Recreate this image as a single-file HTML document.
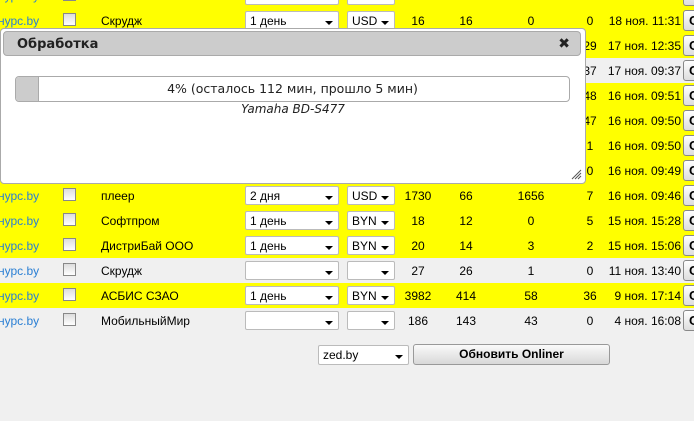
<!DOCTYPE html><html><head><meta charset="utf-8"><style>
*{margin:0;padding:0;box-sizing:border-box}
body{width:694px;height:421px;overflow:hidden;background:#f0f0f0;font-family:"Liberation Sans",sans-serif;font-size:12px;color:#000;position:relative}
.r{position:absolute;left:0;width:694px;height:25px}
.y{background:#ffff00}.g{background:#f0f0f0}
.r span{position:absolute;top:6px;white-space:nowrap}
.l{left:-2px;color:#2a7fd4}
.cb{position:absolute;left:63px;top:5px;width:13px;height:13px;border:1px solid #888;background:linear-gradient(#ddd,#fff)}
.n{left:101px}
.s{position:absolute;top:3px;height:19px;background:#fff;border:1px solid #bbb;border-radius:2px;font-size:12px;padding:2px 4px}
.s:after{content:"";position:absolute;right:5px;top:9px;border-left:4px solid transparent;border-right:4px solid transparent;border-top:4px solid #000}
.s1{left:245px;width:94px}.s2{left:347px;width:48px}
.c{width:40px;text-align:center}
.a{left:398px}.b{left:446px}.d{left:511px}.e{left:570px}
.t{right:13px}
.bt{position:absolute;left:683px;top:2px;width:20px;height:21px;border:1px solid #888;border-radius:3px;background:linear-gradient(#fff,#ddd);font-weight:bold;font-size:13px;line-height:19px;padding-left:5px}
.bt:before{content:"О"}
</style></head><body>
<div class="r y" style="top:-17px"><span class="l">нурс.by</span><div class="cb"></div><div class="s s1"></div><div class="s s2"></div><div class="bt"></div></div>
<div class="r y" style="top:8px"><span class="l">нурс.by</span><div class="cb"></div><span class="n">Скрудж</span><div class="s s1">1 день</div><div class="s s2">USD</div><span class="c a">16</span><span class="c b">16</span><span class="c d">0</span><span class="c e">0</span><span class="t">18 ноя. 11:31</span><div class="bt"></div></div>
<div class="r y" style="top:33px"><span class="c e">29</span><span class="t">17 ноя. 12:35</span><div class="bt"></div></div>
<div class="r g" style="top:58px"><span class="c e">37</span><span class="t">17 ноя. 09:37</span><div class="bt"></div></div>
<div class="r y" style="top:83px"><span class="c e">48</span><span class="t">16 ноя. 09:51</span><div class="bt"></div></div>
<div class="r y" style="top:108px"><span class="c e">47</span><span class="t">16 ноя. 09:50</span><div class="bt"></div></div>
<div class="r y" style="top:133px"><span class="c e">1</span><span class="t">16 ноя. 09:50</span><div class="bt"></div></div>
<div class="r y" style="top:158px"><span class="c e">0</span><span class="t">16 ноя. 09:49</span><div class="bt"></div></div>
<div class="r y" style="top:183px"><span class="l">нурс.by</span><div class="cb"></div><span class="n">плеер</span><div class="s s1">2 дня</div><div class="s s2">USD</div><span class="c a">1730</span><span class="c b">66</span><span class="c d">1656</span><span class="c e">7</span><span class="t">16 ноя. 09:46</span><div class="bt"></div></div>
<div class="r y" style="top:208px"><span class="l">нурс.by</span><div class="cb"></div><span class="n">Софтпром</span><div class="s s1">1 день</div><div class="s s2">BYN</div><span class="c a">18</span><span class="c b">12</span><span class="c d">0</span><span class="c e">5</span><span class="t">15 ноя. 15:28</span><div class="bt"></div></div>
<div class="r y" style="top:233px"><span class="l">нурс.by</span><div class="cb"></div><span class="n">ДистриБай ООО</span><div class="s s1">1 день</div><div class="s s2">BYN</div><span class="c a">20</span><span class="c b">14</span><span class="c d">3</span><span class="c e">2</span><span class="t">15 ноя. 15:06</span><div class="bt"></div></div>
<div class="r g" style="top:258px"><span class="l">нурс.by</span><div class="cb"></div><span class="n">Скрудж</span><div class="s s1"></div><div class="s s2"></div><span class="c a">27</span><span class="c b">26</span><span class="c d">1</span><span class="c e">0</span><span class="t">11 ноя. 13:40</span><div class="bt"></div></div>
<div class="r y" style="top:283px"><span class="l">нурс.by</span><div class="cb"></div><span class="n">АСБИС СЗАО</span><div class="s s1">1 день</div><div class="s s2">BYN</div><span class="c a">3982</span><span class="c b">414</span><span class="c d">58</span><span class="c e">36</span><span class="t">9 ноя. 17:14</span><div class="bt"></div></div>
<div class="r g" style="top:308px"><span class="l">нурс.by</span><div class="cb"></div><span class="n">МобильныйМир</span><div class="s s1"></div><div class="s s2"></div><span class="c a">186</span><span class="c b">143</span><span class="c d">43</span><span class="c e">0</span><span class="t">4 ноя. 16:08</span><div class="bt"></div></div>
<div class="s" style="left:318px;top:345px;width:91px;height:20px;position:absolute">zed.by</div>
<div style="position:absolute;left:413px;top:344px;width:197px;height:21px;border:1px solid #999;border-radius:3px;background:linear-gradient(#fafafa,#d8d8d8);font-weight:bold;text-align:center;line-height:19px">Обновить Onliner</div>
<div style="position:absolute;left:0;top:28px;width:586px;height:156px;background:#fff;border:1px solid #aaa;border-radius:4px">
<div style="position:absolute;left:2px;top:2px;width:calc(100% - 6px);height:25px;background:#cccccc;border:1px solid #aaa;border-radius:4px;font-family:'DejaVu Sans',sans-serif;font-weight:bold;font-size:13px;line-height:25px;padding-left:13px;color:#222">Обработка<span style="position:absolute;right:10px;top:0;font-size:14px">✖</span></div>
<div style="position:absolute;left:14px;top:47px;width:555px;height:26px;border:1px solid #aaa;border-radius:4px;overflow:hidden;background:#fff;font-family:'DejaVu Sans',sans-serif;font-size:12.5px;text-align:center;line-height:24px;color:#222"><div style="position:absolute;left:0;top:0;width:23px;height:100%;background:#ccc;border-right:1px solid #aaa"></div><span style="position:relative">4% (осталось 112 мин, прошло 5 мин)</span></div>
<div style="position:absolute;left:0;width:100%;top:73px;text-align:center;font-family:'DejaVu Sans',sans-serif;font-style:italic;font-size:12px;color:#222">Yamaha BD-S477</div>
<svg style="position:absolute;right:3px;bottom:3px" width="11" height="11"><path d="M10 1L1 10M10 4L4 10M10 7L7 10" stroke="#555"/></svg>
</div>
</body></html>
